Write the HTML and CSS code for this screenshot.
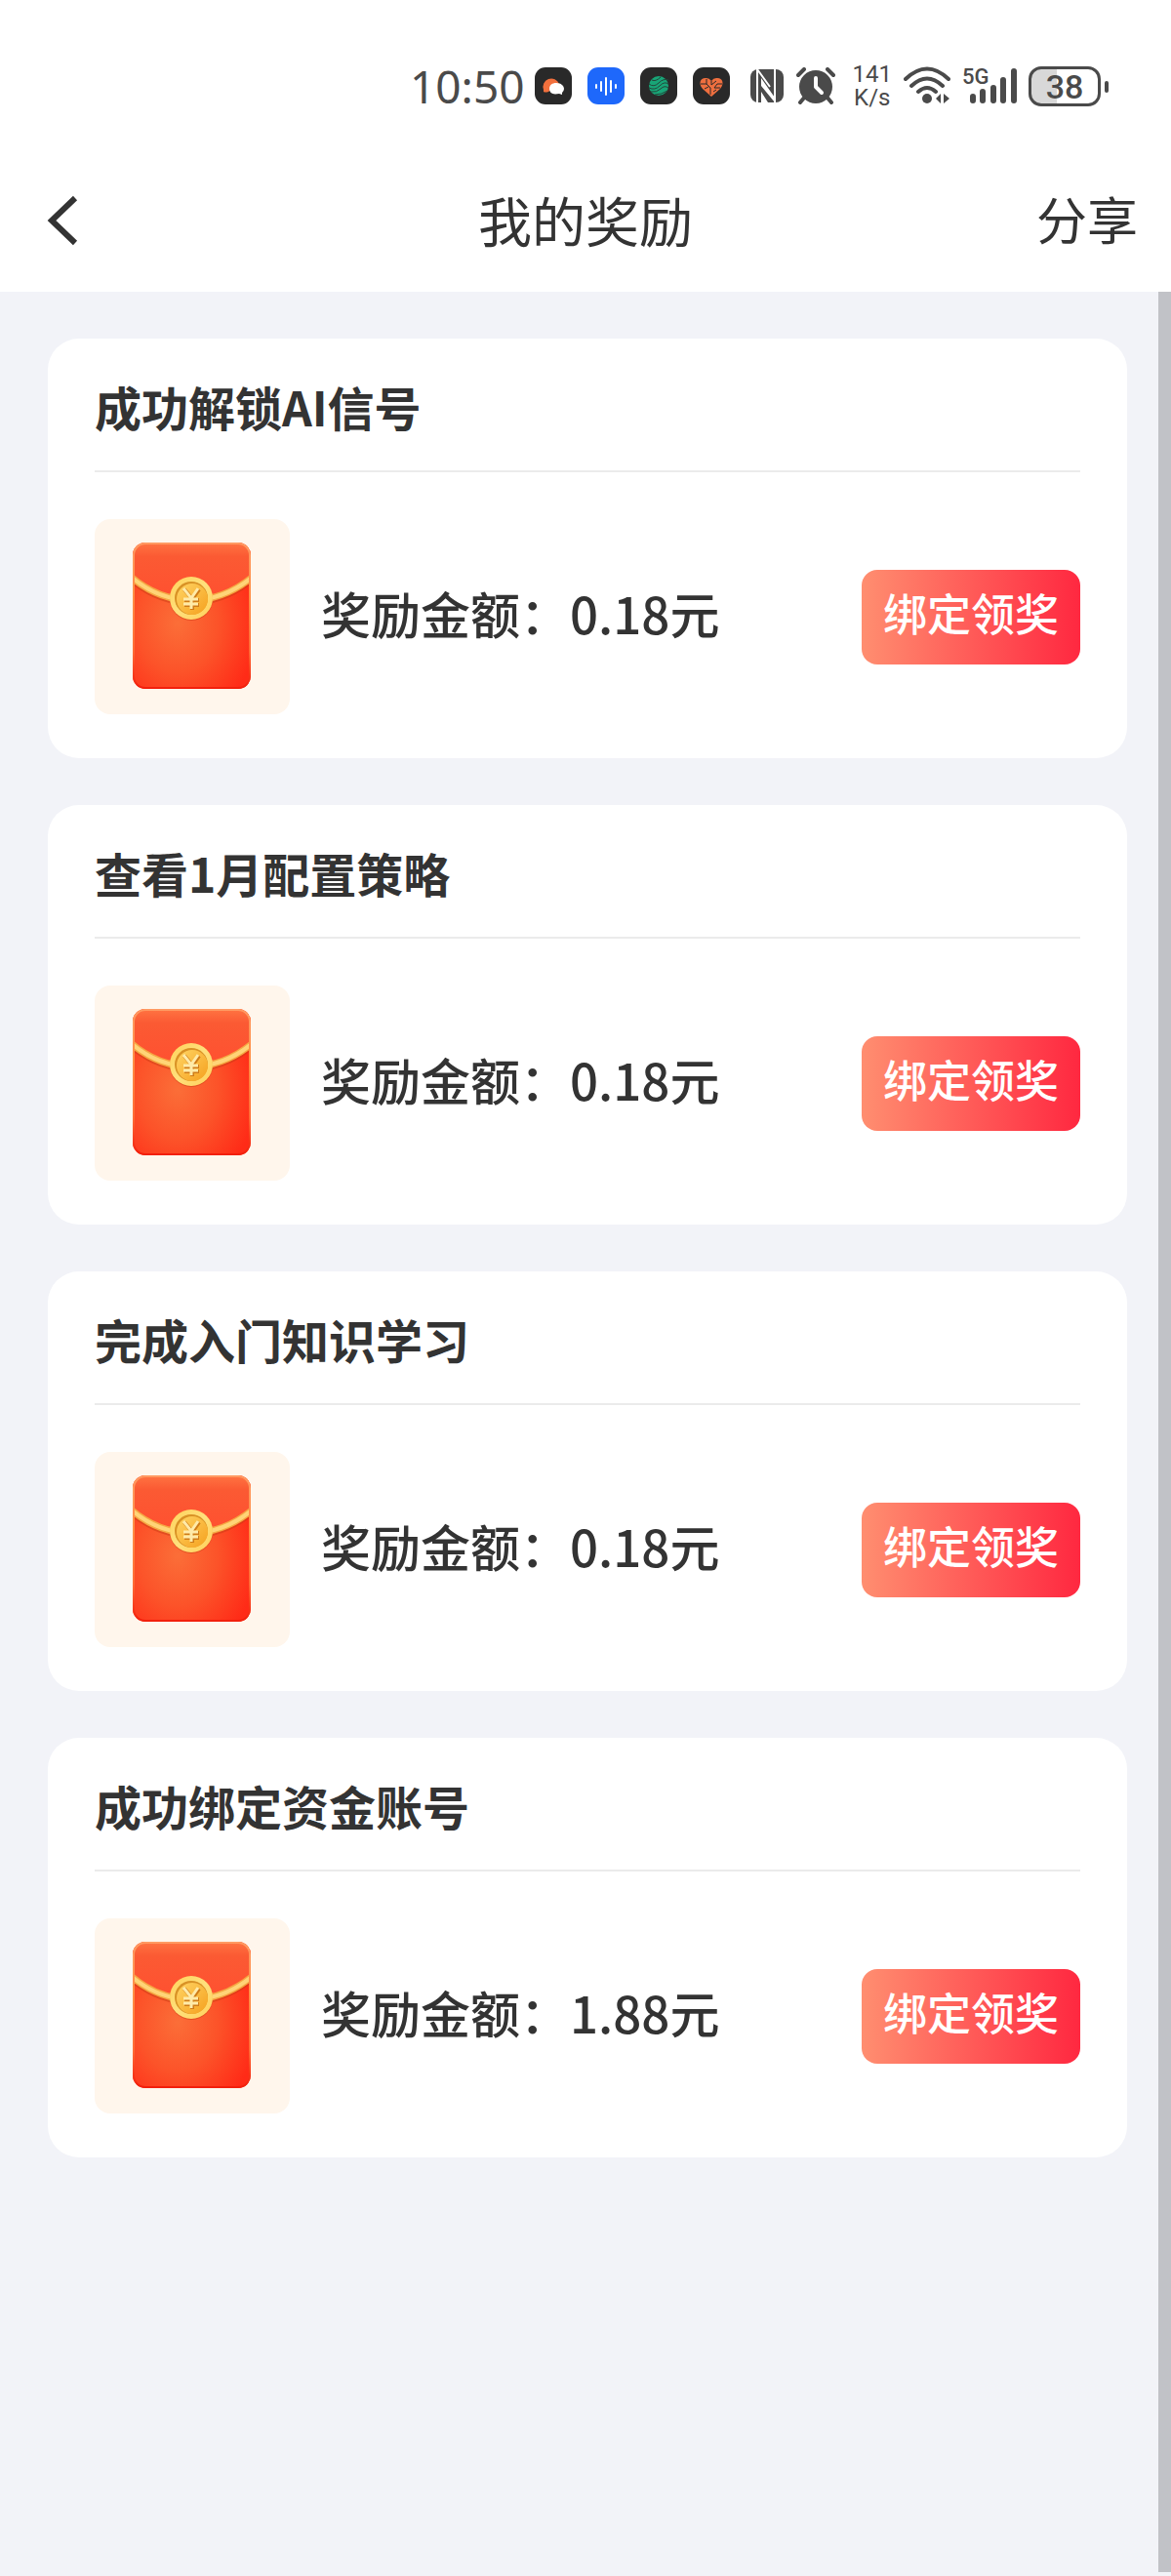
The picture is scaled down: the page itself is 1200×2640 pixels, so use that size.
FILE: index.html
```html
<!DOCTYPE html>
<html lang="zh-CN">

<head>
    <meta charset="UTF-8">
    <meta name="viewport" content="width=device-width, initial-scale=1.0">
    <title>我的奖励</title>
    <link rel="stylesheet" href="styles.css">
</head>

<body>
    <!-- shared drawings -->
    <svg class="defs" width="0" height="0" aria-hidden="true">
        <defs>
            <linearGradient id="flap" x1="0" y1="0" x2="0" y2="1">
                <stop offset="0" stop-color="#ff7442" />
                <stop offset="0.25" stop-color="#fb5a33" />
                <stop offset="1" stop-color="#ff5030" />
            </linearGradient>
            <radialGradient id="pocket" cx="0.38" cy="0.55" r="0.68">
                <stop offset="0" stop-color="#fb6e38" />
                <stop offset="0.5" stop-color="#fc5329" />
                <stop offset="1" stop-color="#ff2b17" />
            </radialGradient>
            <linearGradient id="edge" x1="0" y1="0" x2="0" y2="1">
                <stop offset="0" stop-color="#ff9a62" />
                <stop offset="0.35" stop-color="#ff8f45" />
                <stop offset="0.75" stop-color="#ff6a35" />
                <stop offset="1" stop-color="#f21f0c" />
            </linearGradient>
            <linearGradient id="gold" x1="0" y1="0" x2="1" y2="1">
                <stop offset="0" stop-color="#ffd25a" />
                <stop offset="0.5" stop-color="#ffe07c" />
                <stop offset="1" stop-color="#ffcf58" />
            </linearGradient>
            <linearGradient id="coin" x1="0" y1="0" x2="1" y2="1">
                <stop offset="0" stop-color="#ffd463" />
                <stop offset="1" stop-color="#f5a01e" />
            </linearGradient>
            <clipPath id="packet">
                <rect x="39" y="24" width="121" height="150" rx="13" />
            </clipPath>
        </defs>
        <symbol id="envelope" viewBox="0 0 200 200">
            <g clip-path="url(#packet)">
                <rect x="39" y="24" width="121" height="150" fill="url(#pocket)" />
                <path d="M39 24H160V61Q135 82 99 82T39 61Z" fill="url(#flap)" />
                <path d="M37 61Q65 85 99 85T162 61" fill="none" stroke="#c93a12" stroke-opacity="0.5" stroke-width="7" />
                <path d="M37 59Q65 83 99 83T162 59" fill="none" stroke="#f5a843" stroke-width="7" />
                <path d="M37 59Q65 83 99 83T162 59" fill="none" stroke="#ffd477" stroke-width="4" />
            </g>
            <rect x="40" y="25" width="119" height="148" rx="12" fill="none" stroke="url(#edge)" stroke-width="2" />
            <circle cx="99" cy="82" r="22" fill="#c93a12" fill-opacity="0.5" />
            <circle cx="99" cy="81" r="22" fill="url(#gold)" />
            <circle cx="99" cy="81" r="17" fill="#d99225" />
            <circle cx="100" cy="82" r="16" fill="url(#coin)" />
            <path d="M92 72L100 82L107 72M100 82V93M92 83H107M92 88H107" fill="none" stroke="#cf7c18" stroke-width="4" />
            <path d="M91 71L99 81L106 71M99 81V92M91 82H106M91 87H106" fill="none" stroke="#ffeaa8" stroke-width="3" />
        </symbol>
    </svg>

    <div class="statusbar">
        <span class="clock">10:50</span>

        <div class="apps">
            <svg viewBox="0 0 38 38">
                <rect width="38" height="38" rx="11" fill="#292929" />
                <path d="M9 23A8 8 0 1 1 25 17L14 25Q11 26 9 25Z" fill="#f2703d" />
                <path d="M22 16C27 16 30 19 30 22Q30 24 28 26L28 28L25 27Q15 29 15 22C15 18 18 16 22 16Z" fill="#fff" />
            </svg>
            <svg viewBox="0 0 38 38">
                <rect width="38" height="38" rx="11" fill="#1e68fb" />
                <path d="M9 18V21M14 15V24M19 11V28M24 14V25M29 18V21" fill="none" stroke="#fff" stroke-width="2" stroke-linecap="round" />
            </svg>
            <svg viewBox="0 0 38 38">
                <rect width="38" height="38" rx="11" fill="#292929" />
                <circle cx="19" cy="19" r="10" fill="#18a577" />
                <path d="M9 17Q14 21 19 16T29 13M9 21Q15 24 20 19T29 17M11 25Q17 26 21 22T29 21M12 13Q16 15 21 10M15 28Q22 28 28 24" fill="none" stroke="#24453a" stroke-width="1" />
            </svg>
            <svg viewBox="0 0 38 38">
                <rect width="38" height="38" rx="11" fill="#292929" />
                <path d="M19 30L10 22C5 16 8 10 14 11Q17 11 19 14Q21 11 24 11C30 10 33 16 28 22Z" fill="#ef6f3f" />
                <path d="M8 17H14V12M14 17L18 21V28M19 14V18L24 14M30 17H25L22 21H28M12 22L16 20M21 25L24 23" fill="none" stroke="#292929" stroke-width="1" />
            </svg>
        </div>

        <div class="signals">
            <!-- nfc -->
            <svg class="nfc" viewBox="0 0 36 36">
                <rect x="1" y="1" width="34" height="34" rx="8" fill="#4a4a4a" />
                <path d="M8 1V35M26 1V35M8 1L21 19" fill="none" stroke="#fff" stroke-width="2" />
                <path d="M12 10L26 30V35L12 18ZM12 24L19 35H12Z" fill="#fff" />
            </svg>
            <!-- alarm -->
            <svg class="alarm" viewBox="0 0 40 38">
                <circle cx="20" cy="20" r="17" fill="#4a4a4a" />
                <path d="M2 8L8 2M38 8L32 2M9 30L4 36M31 30L36 36" fill="none" stroke="#4a4a4a" stroke-width="4" stroke-linecap="round" />
                <path d="M20 11V20L26 26" fill="none" stroke="#fff" stroke-width="4" stroke-linecap="round" stroke-linejoin="round" />
            </svg>
            <span class="speed">141<br>K/s</span>
            <!-- wifi -->
            <svg class="wifi" viewBox="0 0 48 40">
                <path d="M2 13Q24 -8 46 13M8 20Q24 5 40 20M15 26Q24 18 33 26" fill="none" stroke="#4a4a4a" stroke-width="4" stroke-linecap="round" />
                <circle cx="24" cy="33" r="5" fill="#4a4a4a" />
                <path d="M33 33L38 28V38ZM41 28L47 33L41 38Z" fill="#4a4a4a" />
            </svg>
            <!-- mobile network -->
            <div class="network">
                <span class="network-type">5G</span>
                <svg viewBox="0 0 56 38">
                    <path d="M11 30V34M21 25V34M32 21V34M42 13V34M53 4V34" fill="none" stroke="#4a4a4a" stroke-width="6" stroke-linecap="round" />
                </svg>
            </div>
            <div class="battery"><span>38</span></div>
        </div>
    </div>

    <header class="navbar">
        <a class="back" href="#" aria-label="返回">
            <svg viewBox="0 0 32 52">
                <path d="M29 3L5 26L29 49" fill="none" stroke="#333" stroke-width="6" />
            </svg>
        </a>
        <h1>我的奖励</h1>
        <a class="share" href="#">分享</a>
    </header>

    <main class="content">
        <section class="card">
            <h2>成功解锁AI信号</h2>
            <div class="reward">
                <svg class="thumb"><use href="#envelope" /></svg>
                <p>奖励金额：0.18元</p>
                <button type="button">绑定领奖</button>
            </div>
        </section>

        <section class="card">
            <h2>查看1月配置策略</h2>
            <div class="reward">
                <svg class="thumb"><use href="#envelope" /></svg>
                <p>奖励金额：0.18元</p>
                <button type="button">绑定领奖</button>
            </div>
        </section>

        <section class="card">
            <h2>完成入门知识学习</h2>
            <div class="reward">
                <svg class="thumb"><use href="#envelope" /></svg>
                <p>奖励金额：0.18元</p>
                <button type="button">绑定领奖</button>
            </div>
        </section>

        <section class="card">
            <h2>成功绑定资金账号</h2>
            <div class="reward">
                <svg class="thumb"><use href="#envelope" /></svg>
                <p>奖励金额：1.88元</p>
                <button type="button">绑定领奖</button>
            </div>
        </section>

        <div class="scrollbar"></div>
    </main>
</body>

</html>
```
FILE: styles.css
```css
* {
    box-sizing: border-box;
}

body {
    display: flex;
    flex-direction: column;
    min-height: 100vh;
    margin: 0;
    background-color: #f2f3f8;
    color: #333;
    font-family: "Noto Sans CJK SC", sans-serif;
}

h1,
h2,
p {
    margin: 0;
}

a {
    color: inherit;
    text-decoration: none;
}

.defs {
    position: absolute;
}

/* status bar */

.statusbar {
    display: flex;
    align-items: center;
    justify-content: flex-end;
    height: 176px;
    padding: 0 72px 0 0;
    background-color: #fff;
    color: #4a4a4a;
    font-family: Roboto, sans-serif;
}

.clock {
    font-family: "Noto Sans", sans-serif;
    font-size: 46px;
    line-height: 48px;
}

.apps {
    display: flex;
    gap: 16px;
    margin-left: 10px;
}

.apps svg {
    width: 38px;
    height: 38px;
}

.signals {
    display: flex;
    align-items: center;
    gap: 12px;
    margin-left: 20px;
}

.nfc {
    width: 36px;
    height: 36px;
}

.alarm {
    width: 40px;
    height: 38px;
}

.speed {
    padding-left: 6px;
    font-size: 24px;
    line-height: 24px;
    text-align: center;
}

.wifi {
    width: 48px;
    height: 40px;
}

.network {
    position: relative;
    display: flex;
}

.network svg {
    width: 56px;
    height: 38px;
}

.network-type {
    position: absolute;
    top: 0;
    left: 0;
    font-size: 22px;
    font-weight: 500;
    line-height: 20px;
}

.battery {
    position: relative;
    width: 74px;
    height: 41px;
    border: 3px solid #4a4a4a;
    border-radius: 13px;
    background: linear-gradient(to right, #d8d8d8 38%, #fff 38%);
    font-size: 34px;
    font-weight: 500;
    line-height: 36px;
    text-align: center;
}

.battery::after {
    content: "";
    position: absolute;
    top: 12px;
    right: -11px;
    width: 4px;
    height: 12px;
    border-radius: 2px;
    background-color: #4a4a4a;
}

/* title bar */

.navbar {
    display: grid;
    grid-template-columns: 1fr auto 1fr;
    align-items: center;
    height: 123px;
    padding: 0 34px 28px;
    background-color: #fff;
}

.navbar h1 {
    font-size: 55px;
    font-weight: 400;
    line-height: 80px;
}

.back {
    padding: 4px 0 0 14px;
}

.back svg {
    display: block;
    width: 32px;
    height: 52px;
}

.share {
    justify-self: end;
    font-size: 52px;
    line-height: 80px;
}

/* reward list */

.content {
    position: relative;
    display: flex;
    flex: 1 auto;
    flex-direction: column;
    gap: 48px;
    padding: 48px 45px 48px 49px;
}

.card {
    padding: 0 48px 45px;
    border-radius: 32px;
    background-color: #fff;
}

.card h2 {
    padding: 33px 0 30px;
    border-bottom: 2px solid #ebebeb;
    font-size: 48px;
    font-weight: 700;
    line-height: 72px;
}

.reward {
    display: flex;
    align-items: center;
    padding-top: 48px;
}

.thumb {
    flex: none;
    width: 200px;
    height: 200px;
    border-radius: 16px;
    background-color: #fff6ec;
}

.reward p {
    flex: 1;
    margin-left: 32px;
    padding-bottom: 8px;
    font-size: 51px;
    font-weight: 500;
    line-height: 80px;
}

.reward button {
    height: 97px;
    padding: 0 22px 10px;
    border: none;
    border-radius: 16px;
    background: linear-gradient(to right, #ff8e70, #ff2840);
    color: #fff;
    font-family: inherit;
    font-size: 45px;
    font-weight: 500;
}

.scrollbar {
    position: absolute;
    top: 0;
    right: 0;
    bottom: 4px;
    width: 13px;
    background-color: #c1c2c7;
}
```
